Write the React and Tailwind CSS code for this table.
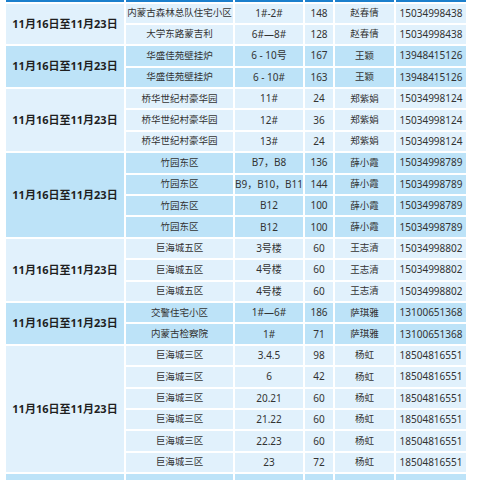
import React from "react";

const L = "bg-[#e1f1fc]";
const D = "bg-[#bde3f8]";

const groups = [
  { bg: L, span: "row-span-2", rows: [
    ["内蒙古森林总队住宅小区", "1#-2#", "148", "赵春倩", "15034998438"],
    ["大学东路蒙吉利", "6#—8#", "128", "赵春倩", "15034998438"],
  ]},
  { bg: D, span: "row-span-2", rows: [
    ["华盛佳苑壁挂炉", "6 - 10号", "167", "王颖", "13948415126"],
    ["华盛佳苑壁挂炉", "6 - 10#", "163", "王颖", "13948415126"],
  ]},
  { bg: L, span: "row-span-3", rows: [
    ["桥华世纪村豪华园", "11#", "24", "郑紫娟", "15034998124"],
    ["桥华世纪村豪华园", "12#", "36", "郑紫娟", "15034998124"],
    ["桥华世纪村豪华园", "13#", "24", "郑紫娟", "15034998124"],
  ]},
  { bg: D, span: "row-span-4", rows: [
    ["竹园东区", "B7，B8", "136", "薛小霞", "15034998789"],
    ["竹园东区", "B9，B10，B11", "144", "薛小霞", "15034998789"],
    ["竹园东区", "B12", "100", "薛小霞", "15034998789"],
    ["竹园东区", "B12", "100", "薛小霞", "15034998789"],
  ]},
  { bg: L, span: "row-span-3", rows: [
    ["巨海城五区", "3号楼", "60", "王志清", "15034998802"],
    ["巨海城五区", "4号楼", "60", "王志清", "15034998802"],
    ["巨海城五区", "4号楼", "60", "王志清", "15034998802"],
  ]},
  { bg: D, span: "row-span-2", rows: [
    ["交警住宅小区", "1#—6#", "186", "萨琪雅", "13100651368"],
    ["内蒙古检察院", "1#", "71", "萨琪雅", "13100651368"],
  ]},
  { bg: L, span: "row-span-6", rows: [
    ["巨海城三区", "3.4.5", "98", "杨虹", "18504816551"],
    ["巨海城三区", "6", "42", "杨虹", "18504816551"],
    ["巨海城三区", "20.21", "60", "杨虹", "18504816551"],
    ["巨海城三区", "21.22", "60", "杨虹", "18504816551"],
    ["巨海城三区", "22.23", "60", "杨虹", "18504816551"],
    ["巨海城三区", "23", "72", "杨虹", "18504816551"],
  ]},
  { bg: D, span: "row-span-2", rows: [
    ["", "", "", "", ""],
    ["", "", "", "", ""],
  ]},
];

const cols = "grid grid-cols-[118px_107px_68px_28px_59px_70px] gap-x-[2px]";

export default function App() {
  return (
    <div
      className="w-[480px] h-[480px] overflow-hidden bg-white pl-[6px]"
      style={{ fontFamily: '"Noto Sans", "Noto Sans CJK SC", sans-serif' }}
    >
      <div className={`${cols} h-[19px] mt-[-17.5px] mb-[2px]`}>
        {[0, 1, 2, 3, 4, 5].map((i) => (
          <div key={i} className="bg-[#1b7fcc]" />
        ))}
      </div>
      <div className={`${cols} auto-rows-[19.4px] gap-y-[2px] text-[#333]`}>
        {groups.map((g, gi) => (
          <React.Fragment key={gi}>
            <div
              className={`${g.span} ${g.bg} flex items-center justify-center font-bold text-[11px] text-[#1f1f1f]`}
            >
              {g.rows[0][0] !== "" ? "11月16日至11月23日" : ""}
            </div>
            {g.rows.map((r, ri) => (
              <React.Fragment key={ri}>
                <div className={`${g.bg} flex items-center justify-center text-[9.5px] whitespace-nowrap`}>{r[0]}</div>
                <div className={`${g.bg} flex items-center justify-center text-[10px] whitespace-nowrap`}>{r[1]}</div>
                <div className={`${g.bg} flex items-center justify-center text-[10px]`}>{r[2]}</div>
                <div className={`${g.bg} flex items-center justify-center text-[9.5px]`}>{r[3]}</div>
                <div className={`${g.bg} flex items-center justify-center text-[10px]`}>{r[4]}</div>
              </React.Fragment>
            ))}
          </React.Fragment>
        ))}
      </div>
    </div>
  );
}
